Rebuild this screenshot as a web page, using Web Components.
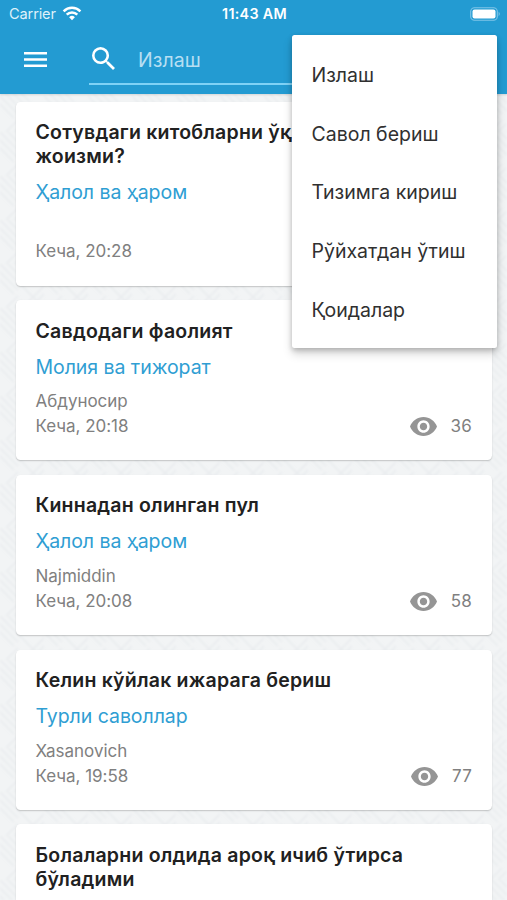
<!DOCTYPE html>
<html lang="uz">
<head>
<meta charset="utf-8">
<title>Савол-жавоб</title>
<style>
html,body{margin:0;height:100%;overflow:hidden}
body{font-family:Inter,"Noto Sans",sans-serif}
</style>
</head>
<body>
<qa-app></qa-app>
<script>
const define=(name,html)=>customElements.define(name,class extends HTMLElement{
  constructor(){super();this.attachShadow({mode:'open'}).innerHTML=html;}
});

define('status-bar',`
<style>
:host{display:grid;grid-template-columns:1fr auto 1fr;align-items:center;height:27px;padding:0 6px 0 9px;color:#fff;font-size:14.6px;box-sizing:border-box}
.left{display:flex;align-items:center;gap:6px;color:#dff1fa;letter-spacing:-.15px}
.time{font-weight:600;font-size:14.3px;letter-spacing:.3px;margin-right:1px}
.batt{justify-self:end;display:block}
svg{display:block}
</style>
<div class="left"><span>Carrier</span>
<svg width="20" height="15" viewBox="0 0 20 15" fill="none" stroke="#fff" stroke-width="2.5"><path d="M1.6 5.3a12 12 0 0 1 16.8 0M4.7 8.6a7.5 7.5 0 0 1 10.6 0"/><path d="M10 14.2 7.1 11.2a4.1 4.1 0 0 1 5.8 0z" fill="#fff" stroke="none"/></svg></div>
<span class="time">11:43 AM</span>
<svg class="batt" width="31" height="14" viewBox="0 0 31 14"><rect x=".7" y=".7" width="26.6" height="12.6" rx="3.8" fill="none" stroke="#80c5e8" stroke-width="1.1"/><rect x="2.5" y="2.4" width="23" height="9.2" rx="2.1" fill="#fff"/><path d="M28.7 4.8q2 2.2 0 4.4z" fill="#8dcbea"/></svg>`);

define('search-field',`
<style>
:host{display:flex;align-items:center;width:385px;height:50px;box-sizing:border-box;border-bottom:2px solid #7fd2f6;color:#b7dff2;font-size:19.5px;letter-spacing:.05px;gap:23px;padding:0 0 1px 3px}
svg{display:block}
::slotted(*){padding-top:2px}
</style>
<svg width="23" height="23" viewBox="3 3 17.5 17.5" fill="#fff"><path d="M15.5 14h-.79l-.28-.27A6.47 6.47 0 0 0 16 9.5 6.5 6.5 0 1 0 9.5 16c1.61 0 3.09-.59 4.23-1.57l.27.28v.79l5 4.99L20.49 19l-4.99-5zm-6 0C7.01 14 5 11.99 5 9.5S7.01 5 9.5 5 14 7.01 14 9.5 11.99 14 9.5 14z"/></svg>
<slot></slot>`);

define('app-bar',`
<style>
:host{display:block;height:94px;background:#239bd2;box-sizing:border-box;box-shadow:0 1px 2px rgba(0,0,0,.13);position:relative}
.row{display:flex;align-items:flex-start;padding:8px 0 0 24px;gap:42px}
.burger{display:block;margin-top:16px}
</style>
<status-bar></status-bar>
<div class="row"><svg class="burger" width="23" height="17" fill="#fff"><path d="M0 1h23v2.6H0zM0 7.2h23v2.6H0zM0 13.4h23V16H0z"/></svg><search-field><span>Излаш</span></search-field></div>`);

define('view-count',`
<style>
:host{display:flex;align-items:center;gap:14px;letter-spacing:.2px}
svg{display:block}
</style>
<svg width="27" height="19" viewBox="1 4.5 22 15" preserveAspectRatio="none" fill="#959595"><path d="M12 4.5C7 4.5 2.73 7.61 1 12c1.73 4.39 6 7.5 11 7.5s9.27-3.11 11-7.5c-1.73-4.39-6-7.5-11-7.5zM12 17c-2.76 0-5-2.24-5-5s2.24-5 5-5 5 2.24 5 5-2.24 5-5 5zm0-8c-1.66 0-3 1.34-3 3s1.34 3 3 3 3-1.34 3-3-1.34-3-3-3z"/></svg>
<slot></slot>`);

define('question-card',`
<style>
:host{display:block;box-sizing:border-box;background:#fff;border-radius:4.5px;padding:19.5px 20px 21px 19.5px;box-shadow:0 1px 1.5px rgba(0,0,0,.2);color:#808080;font-size:17px;letter-spacing:-.03px}
.title{color:#212121;font-weight:600;font-size:19.5px;line-height:23.8px;letter-spacing:.22px}
.cat{color:#2f9ed3;font-size:19.5px;line-height:24px;margin-top:11.2px;letter-spacing:-.05px}
.author{line-height:25px;height:25px;margin-top:10.6px}
.foot{display:flex;justify-content:space-between;line-height:25.2px}
</style>
<div class="title"><slot name="title"></slot></div>
<div class="cat"><slot name="category"></slot></div>
<div class="author"><slot name="author"></slot></div>
<div class="foot"><slot name="date"></slot><slot name="views"></slot></div>`);

define('question-list',`
<style>
:host{display:flex;flex-direction:column;gap:14.5px;padding:7.5px 15px 0 16px}
</style><slot></slot>`);

define('menu-item',`
<style>:host{display:flex;align-items:center;height:58.7px;padding:0 19.5px;color:#303030;font-size:19.5px;letter-spacing:0;white-space:nowrap}</style><slot></slot>`);

define('popup-menu',`
<style>:host{display:block;box-sizing:border-box;width:205px;height:313px;padding:10.6px 0 0;background:#fff;border-radius:2.5px;box-shadow:0 6px 10px rgba(0,0,0,.17),0 2px 5px rgba(0,0,0,.2)}</style><slot></slot>`);

define('qa-app',`
<style>
:host{display:block;position:relative;width:507px;height:900px;overflow:hidden;background:#f2f4f5}
.texture{position:absolute;inset:0;width:100%;height:100%}
question-list{position:relative}
popup-menu{position:absolute;left:292px;top:35px}
</style>
<svg class="texture"><defs><pattern id="weave" width="44" height="44" patternUnits="userSpaceOnUse"><g fill="none" stroke="#dfe4e7" stroke-opacity=".5" stroke-width="1.6"><path d="M0 0l22 22M8 0l18 18M16 0l14 14M0 8l18 18M0 16l14 14M22 22l22 22M44 22L22 44M44 30L30 44M44 38l-6 6M22 36L14 44M18 32L6 44"/></g></pattern><filter id="soft"><feGaussianBlur stdDeviation=".8"/></filter></defs><rect width="507" height="900" fill="url(#weave)" filter="url(#soft)"/></svg>
<app-bar></app-bar>
<question-list>
<question-card><span slot="title">Сотувдаги китобларни ўқиш<br>жоизми?</span><span slot="category">Ҳалол ва ҳаром</span><span slot="date">Кеча, 20:28</span></question-card>
<question-card><span slot="title">Савдодаги фаолият</span><span slot="category">Молия ва тижорат</span><span slot="author">Абдуносир</span><span slot="date">Кеча, 20:18</span><view-count slot="views">36</view-count></question-card>
<question-card><span slot="title">Киннадан олинган пул</span><span slot="category">Ҳалол ва ҳаром</span><span slot="author">Najmiddin</span><span slot="date">Кеча, 20:08</span><view-count slot="views">58</view-count></question-card>
<question-card><span slot="title">Келин кўйлак ижарага бериш</span><span slot="category">Турли саволлар</span><span slot="author">Xasanovich</span><span slot="date">Кеча, 19:58</span><view-count slot="views">77</view-count></question-card>
<question-card><span slot="title">Болаларни олдида ароқ ичиб ўтирса<br>бўладими</span></question-card>
</question-list>
<popup-menu><menu-item>Излаш</menu-item><menu-item>Савол бериш</menu-item><menu-item>Тизимга кириш</menu-item><menu-item>Рўйхатдан ўтиш</menu-item><menu-item>Қоидалар</menu-item></popup-menu>`);
</script>
</body>
</html>
